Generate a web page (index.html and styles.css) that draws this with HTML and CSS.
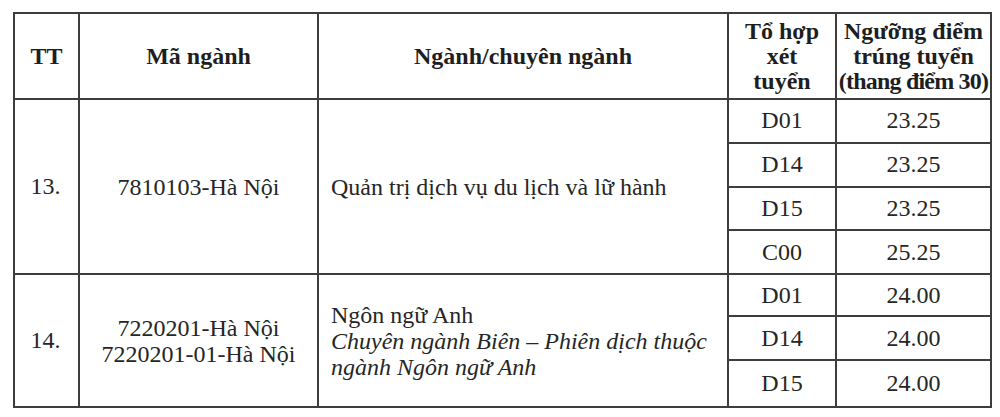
FILE: index.html
```html
<!DOCTYPE html>
<html lang="vi">
<head>
<meta charset="utf-8">
<title>Ngưỡng điểm trúng tuyển</title>
<link rel="stylesheet" href="styles.css">
</head>
<body>
<table class="scores">
  <colgroup>
    <col class="c-tt">
    <col class="c-code">
    <col class="c-name">
    <col class="c-combo">
    <col class="c-score">
  </colgroup>
  <thead>
    <tr class="head-row">
      <th>TT</th>
      <th>Mã ngành</th>
      <th>Ngành/chuyên ngành</th>
      <th>Tổ hợp<br>xét<br>tuyển</th>
      <th>Ngưỡng điểm<br>trúng tuyển<br><span class="tight">(thang điểm 30)</span></th>
    </tr>
  </thead>
  <tbody>
    <tr class="sub">
      <td rowspan="4" class="num">13.</td>
      <td rowspan="4" class="code">7810103-Hà Nội</td>
      <td rowspan="4" class="name">Quản trị dịch vụ du lịch và lữ hành</td>
      <td>D01</td>
      <td>23.25</td>
    </tr>
    <tr class="sub"><td>D14</td><td>23.25</td></tr>
    <tr class="sub"><td>D15</td><td>23.25</td></tr>
    <tr class="sub"><td>C00</td><td>25.25</td></tr>
    <tr class="sub2 first">
      <td rowspan="3" class="num">14.</td>
      <td rowspan="3" class="code">7220201-Hà Nội<br>7220201-01-Hà Nội</td>
      <td rowspan="3" class="name">Ngôn ngữ Anh<br><em>Chuyên ngành Biên – Phiên dịch thuộc ngành Ngôn ngữ Anh</em></td>
      <td>D01</td>
      <td>24.00</td>
    </tr>
    <tr class="sub2"><td>D14</td><td>24.00</td></tr>
    <tr class="sub2 last"><td>D15</td><td>24.00</td></tr>
  </tbody>
</table>
</body>
</html>
```

FILE: styles.css
```css
html, body {
  margin: 0;
  padding: 0;
  background: #ffffff;
}

body {
  padding: 12px 0 0 13px;
  font-family: "Liberation Serif", "Times New Roman", serif;
  color: #262626;
}

.scores {
  border-collapse: collapse;
  table-layout: fixed;
  width: 977px;
  font-family: "Liberation Serif", "Times New Roman", serif;
  font-size: 24px;
  line-height: 25px;
}

.c-tt { width: 65px; }
.c-code { width: 239px; }
.c-name { width: 410px; }
.c-combo { width: 108px; }
.c-score { width: 155px; }

.scores th,
.scores td {
  border: 2px solid #3d3d3d;
  padding: 0;
  text-align: center;
  vertical-align: middle;
}

.scores th {
  font-weight: bold;
  color: #1e1e1e;
}

.head-row th {
  height: 84px;
}

.tight {
  letter-spacing: -0.8px;
  white-space: nowrap;
}

.sub td {
  height: 41.75px;
}

.sub2 td {
  height: 42px;
}

.sub2.first td {
  height: 40px;
}

.sub2.last td {
  height: 45px;
}

.scores td.name {
  text-align: left;
  padding: 0 14px 0 12px;
  line-height: 26px;
}

.scores td.code {
  line-height: 26px;
}

.scores td.num {
  padding-right: 2px;
}

.name em {
  font-style: italic;
}
```
